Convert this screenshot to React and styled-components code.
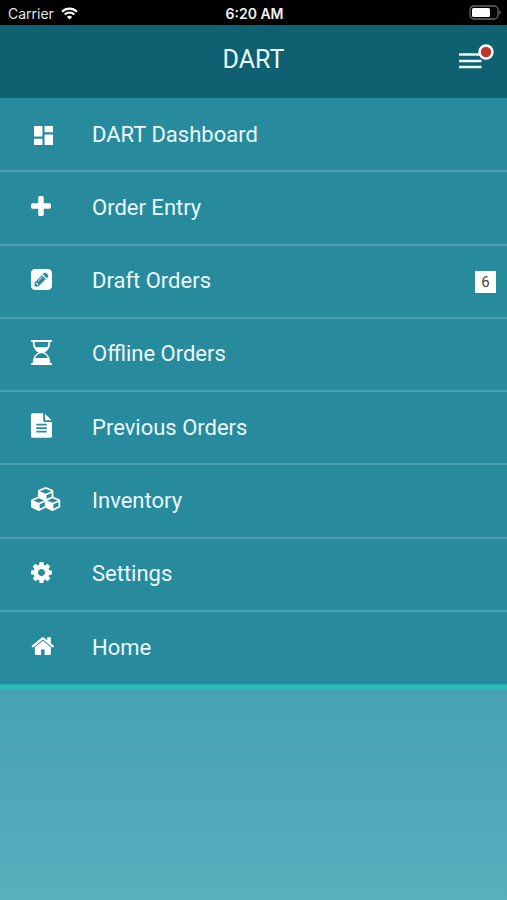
import React from "react";
import styled, { createGlobalStyle } from "styled-components";

const GlobalStyle = createGlobalStyle`
  *, *::before, *::after { box-sizing: border-box; }
  body {
    margin: 0;
    font-family: Roboto, "Liberation Sans", sans-serif;
    color: #fff;
  }
`;

const Screen = styled.div`
  display: flex;
  flex-direction: column;
  min-height: 100vh;
  background: #4aa4b4;
`;

const StatusBar = styled.div`
  display: grid;
  grid-template-columns: 1fr auto 1fr;
  align-items: center;
  height: 25px;
  padding: 2px 6px 0 8px;
  background: #000;
  color: #e4e4e4;
  font: 400 14px/20px Inter, sans-serif;
`;

const Network = styled.div`
  display: flex;
  align-items: center;
  gap: 7px;
`;

const Clock = styled.time`
  color: #f2f2f2;
  font-weight: 600;
`;

const Battery = styled.svg`
  justify-self: end;
  display: block;
`;

const Header = styled.header`
  display: grid;
  grid-template-columns: 48px 1fr 48px;
  align-items: center;
  height: 73px;
  padding: 0 12px 4px;
  background: #0f6171;
`;

const Title = styled.h1`
  grid-column: 2;
  margin: 0;
  text-align: center;
  color: #e9f9fc;
  font-size: 25px;
  font-weight: 400;
  line-height: 32px;
`;

const MenuButton = styled.button`
  justify-self: end;
  display: block;
  padding: 0;
  border: 0;
  background: none;
  cursor: pointer;
`;

const Menu = styled.ul`
  display: grid;
  grid-auto-rows: 1fr;
  min-height: 587px;
  margin: 0;
  padding: 1px 0 0;
  list-style: none;
  background: #288a9d;
`;

const MenuItem = styled.li`
  display: grid;
  border-bottom: 2px solid #4a9fb3;

  &:last-child { border-bottom: 1px solid #2eaab4; }
`;

const MenuLink = styled.a`
  display: grid;
  grid-template-columns: 61px 1fr auto;
  align-items: center;
  padding: 0 11px 0 31px;
  color: #e9f9fc;
  font-size: 22px;
  line-height: 28px;
  text-decoration: none;
`;

const IconSlot = styled.span`
  display: flex;
  padding: ${(p) => (p.$inset ? "2px 0 0 3px" : "0 0 4px")};
  color: #fff;
`;

const Count = styled.span`
  display: grid;
  place-items: center;
  width: 21px;
  height: 22px;
  margin-top: 2px;
  background: #fff;
  color: #444;
  font-size: 15px;
  line-height: 20px;
`;

const Footer = styled.div`
  flex: 1;
  border-top: 5px solid #2bbdb5;
  background: linear-gradient(#48a2b2, #51a8b8 60%, #5aafbe);
`;

const Glyph = ({ box, width, height, d }) => (
  <svg width={width} height={height} viewBox={box} fill="currentColor" fillRule="evenodd" aria-hidden="true">
    <path d={d} />
  </svg>
);

const icons = {
  dashboard: {
    box: "3 3 18 18", width: 19, height: 19,
    d: "M3 13h8V3H3v10zm0 8h8v-6H3v6zm10 0h8V11h-8v10zm0-18v6h8V3h-8z",
  },
  plus: {
    box: "192 192 1408 1408", width: 20, height: 20,
    d: "M1600 800v192q0 40-28 68t-68 28h-416v416q0 40-28 68t-68 28h-192q-40 0-68-28t-28-68v-416h-416q-40 0-68-28t-28-68v-192q0-40 28-68t68-28h416v-416q0-40 28-68t68-28h192q40 0 68 28t28 68v416h416q40 0 68 28t28 68z",
  },
  pencil: {
    box: "0 0 1536 1536", width: 21, height: 21,
    d: "M404 980l152 152-52 52h-56v-96h-96v-56zm414-390q14 13-3 30l-291 291q-17 17-30 3-14-13 3-30l291-291q17-17 30-3zm-274 690l544-544-288-288-544 544v288h288zm608-608l92-92q28-28 28-68t-28-68l-152-152q-28-28-68-28t-68 28l-92 92zm384-384v960q0 119-84.5 203.5t-203.5 84.5h-960q-119 0-203.5-84.5t-84.5-203.5v-960q0-119 84.5-203.5t203.5-84.5h960q119 0 203.5 84.5t84.5 203.5z",
  },
  hourglass: {
    box: "0 0 21 25", width: 21, height: 25,
    d: "M.4 0h20.200q.4 0 .4.4v1.200q0 .4-.4.4H19.200c0 5.300-2.200 8.800-5.700 10.500 3.500 1.700 5.700 5.200 5.700 10.500h1.400q.4 0 .4.4v1.200q0 .4-.4.4H.4q-.4 0-.4-.4v-1.200q0-.4.4-.4h1.400c0-5.300 2.200-8.800 5.700-10.500C4 10.800 1.800 7.300 1.800 2H.4Q0 2 0 1.600V.4Q0 0 .4 0zM3.500 2c0 2 .4 3.800 1.200 5.300h11.600c.8-1.500 1.200-3.300 1.200-5.300zM9 13.200C6.800 14 5.200 15.500 4.300 18h12.400c-.9-2.500-2.500-4-4.700-4.800z",
  },
  file: {
    box: "128 0 1536 1792", width: 21, height: 25,
    d: "M1596 476q14 14 28 36h-472v-472q22 14 36 28zm-476 164h544v1056q0 40-28 68t-68 28h-1344q-40 0-68-28t-28-68v-1600q0-40 28-68t68-28h800v544q0 40 28 68t68 28zm160 736v-64q0-14-9-23t-23-9h-704q-14 0-23 9t-9 23v64q0 14 9 23t23 9h704q14 0 23-9t9-23zm0-256v-64q0-14-9-23t-23-9h-704q-14 0-23 9t-9 23v64q0 14 9 23t23 9h704q14 0 23-9t9-23zm0-256v-64q0-14-9-23t-23-9h-704q-14 0-23 9t-9 23v64q0 14 9 23t23 9h704q14 0 23-9t9-23z",
  },
  cubes: {
    box: "0 0 2304 1792", width: 31, height: 24,
    d: "M640 1632l384-192v-314l-384 164v342zm-64-454l404-173-404-173-404 173zm1088 454l384-192v-314l-384 164v342zm-64-454l404-173-404-173-404 173zm-448-293l384-165v-266l-384 164v267zm-64-379l441-189-441-189-441 189zm1088 518v416q0 36-19 67t-52 47l-448 224q-25 14-57 14t-57-14l-448-224q-4-2-7-4-2 2-7 4l-448 224q-25 14-57 14t-57-14l-448-224q-33-16-52-47t-19-67v-416q0-38 21.500-70t56.500-48l434-186v-400q0-38 21.500-70t56.500-48l448-192q23-10 50-10t50 10l448 192q35 16 56.500 48t21.500 70v400l434 186q36 16 57 48t21 70z",
  },
  cog: {
    box: "128 128 1536 1536", width: 21, height: 21,
    d: "M1152 896q0-106-75-181t-181-75-181 75-75 181 75 181 181 75 181-75 75-181zm512-109v222q0 12-8 23t-20 13l-185 28q-19 54-39 91 35 50 107 138 10 12 10 25t-9 23q-27 37-99 108t-94 71q-12 0-26-9l-138-108q-44 23-91 38-16 136-29 186-7 28-36 28h-222q-14 0-24.5-8.5t-11.5-21.5l-28-184q-49-16-90-37l-141 107q-10 9-25 9-14 0-25-11-126-114-165-168-7-10-7-23 0-12 8-23 15-21 51-66.5t54-70.5q-27-50-41-99l-183-27q-13-2-21-12.5t-8-23.5v-222q0-12 8-23t19-13l186-28q14-46 39-92-40-57-107-138-10-12-10-24 0-10 9-23 26-36 98.5-107.5t94.5-71.5q13 0 26 10l138 107q44-23 91-38 16-136 29-186 7-28 36-28h222q14 0 24.5 8.5t11.5 21.5l28 184q49 16 90 37l142-107q9-9 24-9 13 0 25 10 129 119 165 170 7 8 7 22 0 12-8 23-15 21-51 66.5t-54 70.5q26 50 41 98l183 28q13 2 21 12.5t8 23.5z",
  },
  home: {
    box: "40 248 1662 1290", width: 23, height: 18,
    d: "M1472 992v480q0 26-19 45t-45 19h-384v-384h-256v384h-384q-26 0-45-19t-19-45v-480q0-1 .5-3t.5-3l575-474 575 474q1 2 1 6zm223-69l-62 74q-8 9-21 11h-3q-13 0-21-7l-692-577-692 577q-12 8-24 7-13-2-21-11l-62-74q-8-10-7-23.5t11-21.5l719-599q32-26 76-26t76 26l244 204v-195q0-14 9-23t23-9h192q14 0 23 9t9 23v408l219 182q10 8 11 21.5t-7 23.5z",
  },
};

const items = [
  { label: "DART Dashboard", icon: "dashboard", inset: true },
  { label: "Order Entry", icon: "plus" },
  { label: "Draft Orders", icon: "pencil", count: 6 },
  { label: "Offline Orders", icon: "hourglass" },
  { label: "Previous Orders", icon: "file" },
  { label: "Inventory", icon: "cubes" },
  { label: "Settings", icon: "cog" },
  { label: "Home", icon: "home" },
];

export default function App() {
  return (
    <Screen>
      <GlobalStyle />
      <StatusBar>
        <Network>
          Carrier
          <svg width="17" height="13" viewBox="0 0 17 13" fill="none" stroke="#fff" strokeWidth="2.200" aria-hidden="true">
            <path d="M1 4.700C5.200.5 11.800.5 16 4.700M3.700 7.500c2.700-2.700 6.900-2.700 9.600 0" />
            <path d="M8.500 12.500L5.900 9.900q2.600-2.200 5.200 0z" fill="#fff" stroke="none" />
          </svg>
        </Network>
        <Clock>6:20 AM</Clock>
        <Battery width="32" height="17" viewBox="0 0 32 17" aria-hidden="true">
          <rect x="1" y="1" width="28" height="13" rx="4" fill="none" stroke="#67696b" strokeWidth="1.300" />
          <rect x="3" y="3" width="18" height="9" rx="1.500" fill="#fff" />
          <path d="M30.300 5.300q1.500.6 1.500 2.200t-1.500 2.200z" fill="#67696b" />
        </Battery>
      </StatusBar>
      <Header>
        <Title>DART</Title>
        <MenuButton type="button" aria-label="Menu">
          <svg width="36" height="36" viewBox="0 0 36 36" aria-hidden="true">
            <path d="M0 14.500h22.500M0 21h22.500M0 27h22.500" stroke="#e9f9fc" strokeWidth="2.600" />
            <circle cx="27" cy="12" r="7.700" fill="#fff" />
            <circle cx="27" cy="12" r="5.200" fill="#c2352b" />
          </svg>
        </MenuButton>
      </Header>
      <nav aria-label="Main">
        <Menu>
          {items.map(({ label, icon, inset, count }) => (
            <MenuItem key={label}>
              <MenuLink href="#">
                <IconSlot $inset={inset}>
                  <Glyph {...icons[icon]} />
                </IconSlot>
                {label}
                {count && <Count>{count}</Count>}
              </MenuLink>
            </MenuItem>
          ))}
        </Menu>
      </nav>
      <Footer />
    </Screen>
  );
}
